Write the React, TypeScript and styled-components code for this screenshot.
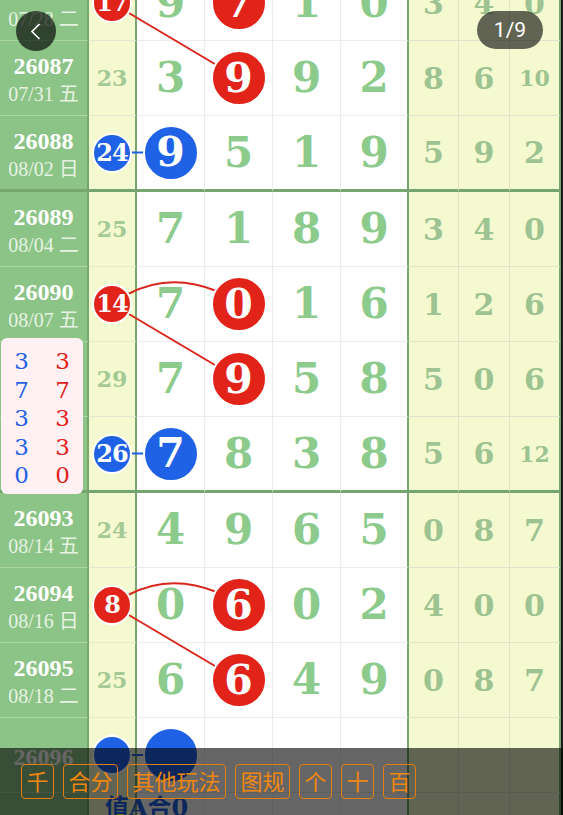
import React from "react";
import styled, { createGlobalStyle } from "styled-components";

const GREEN = "#8cc487";
const EDGE = "#76a56e";
const YELLOW = "#f5f9cf";
const RED = "#e2231a";
const BLUE = "#1f62e6";

const SERIF = `"DejaVu Serif", "Liberation Serif", "Noto Sans CJK SC", serif`;
const NARROW = `"Liberation Serif", "Noto Sans CJK SC", serif`;
const SANS = `"Noto Sans CJK SC", "Noto Sans", sans-serif`;

type Kind = "period" | "sum" | "digit" | "tail";
type Color = "red" | "blue";

const bg: Record<Kind, string> = {
  period: GREEN,
  sum: YELLOW,
  digit: "#ffffff",
  tail: YELLOW,
};

const line: Record<Kind, string> = {
  period: "#a9d3a3",
  sum: "#e6e9cf",
  digit: "#ebebeb",
  tail: "#e2e5cc",
};

const ballColor = (c: Color) => (c === "red" ? RED : BLUE);

type DrawRow = {
  id: string;
  date?: string;
  wd?: string;
  sum: number | null;
  sumBall?: Color;
  digits: (number | null)[];
  ball?: [number, Color];
  tail: (number | null)[];
  end?: boolean;
};

const rows: DrawRow[] = [
  { id: "26086", date: "07/28", wd: "二", sum: 17, sumBall: "red", digits: [9, 7, 1, 0], ball: [1, "red"], tail: [3, 4, 0] },
  { id: "26087", date: "07/31", wd: "五", sum: 23, digits: [3, 9, 9, 2], ball: [1, "red"], tail: [8, 6, 10] },
  { id: "26088", date: "08/02", wd: "日", sum: 24, sumBall: "blue", digits: [9, 5, 1, 9], ball: [0, "blue"], tail: [5, 9, 2], end: true },
  { id: "26089", date: "08/04", wd: "二", sum: 25, digits: [7, 1, 8, 9], tail: [3, 4, 0] },
  { id: "26090", date: "08/07", wd: "五", sum: 14, sumBall: "red", digits: [7, 0, 1, 6], ball: [1, "red"], tail: [1, 2, 6] },
  { id: "26091", date: "08/09", wd: "日", sum: 29, digits: [7, 9, 5, 8], ball: [1, "red"], tail: [5, 0, 6] },
  { id: "26092", date: "08/11", wd: "二", sum: 26, sumBall: "blue", digits: [7, 8, 3, 8], ball: [0, "blue"], tail: [5, 6, 12], end: true },
  { id: "26093", date: "08/14", wd: "五", sum: 24, digits: [4, 9, 6, 5], tail: [0, 8, 7] },
  { id: "26094", date: "08/16", wd: "日", sum: 8, sumBall: "red", digits: [0, 6, 0, 2], ball: [1, "red"], tail: [4, 0, 0] },
  { id: "26095", date: "08/18", wd: "二", sum: 25, digits: [6, 6, 4, 9], ball: [1, "red"], tail: [0, 8, 7] },
  { id: "26096", sum: null, sumBall: "blue", digits: [null, null, null, null], ball: [0, "blue"], tail: [null, null, null] },
];

const missBlue = [3, 7, 3, 3, 0];
const missRed = [3, 7, 3, 3, 0];
const tools = ["千", "合分", "其他玩法", "图规", "个", "十", "百"];

// row geometry, used by the link lines
const heights = rows.map((r) => (r.end ? 76 : 75));
const tops = heights.map((_, i) => heights.slice(0, i).reduce((a, b) => a + b, 0));
const centerY = (i: number) => tops[i] + (heights[i] - (rows[i].end ? 3 : 1)) / 2;
const SUM_X = 112;
const COL_X = [170.5, 238.5, 306.5, 374];

const GlobalStyle = createGlobalStyle`
  html, body {
    margin: 0;
    padding: 0;
    background: #1c1c1c;
    overflow: hidden;
  }
`;

const Screen = styled.div`
  position: relative;
  width: 563px;
  height: 815px;
  overflow: hidden;
  background: #1c1c1c;
`;

const Table = styled.div`
  position: relative;
  width: 561px;
  margin-top: -34px;
`;

const Row = styled.div<{ $end?: boolean }>`
  display: grid;
  grid-template-columns: 89px 48px repeat(4, 68px) 50px 51px 51px;
  height: ${(p) => (p.$end ? 76 : 75)}px;
`;

const Cell = styled.div<{ $kind: Kind; $end?: boolean; $edge?: boolean }>`
  box-sizing: border-box;
  display: flex;
  align-items: center;
  justify-content: center;
  background: ${(p) => bg[p.$kind]};
  border-right: ${(p) => (p.$edge ? `2px solid ${EDGE}` : `1px solid ${line[p.$kind]}`)};
  border-bottom: ${(p) => (p.$end ? `3px solid ${EDGE}` : `1px solid ${line[p.$kind]}`)};
`;

const PeriodCell = styled(Cell)`
  flex-direction: column;
  padding-top: 3px;
`;

const PeriodNo = styled.div`
  font-family: ${NARROW};
  font-weight: 700;
  font-size: 24px;
  line-height: 26px;
  color: #ffffff;
`;

const PeriodDate = styled.div`
  margin-top: 3px;
  font-family: ${NARROW};
  font-size: 20px;
  line-height: 24px;
  color: #e6f3e2;
`;

const SumNum = styled.span`
  font-family: ${SERIF};
  font-weight: 700;
  font-size: 22px;
  color: #a3c995;
`;

const Digit = styled.span`
  font-family: ${SERIF};
  font-weight: 700;
  font-size: 42px;
  line-height: 1;
  color: #8ccb8c;
`;

const TailNum = styled.span<{ $wide?: boolean }>`
  font-family: ${SERIF};
  font-weight: 700;
  font-size: ${(p) => (p.$wide ? 22 : 30)}px;
  color: #9cc391;
`;

const Ball = styled.div<{ $color: Color; $large?: boolean }>`
  position: relative;
  z-index: 2;
  box-sizing: border-box;
  width: ${(p) => (p.$large ? 56 : 40)}px;
  height: ${(p) => (p.$large ? 56 : 40)}px;
  flex-shrink: 0;
  border-radius: 50%;
  border: 2px solid #ffffff;
  background: ${(p) => ballColor(p.$color)};
  display: flex;
  align-items: center;
  justify-content: center;
  color: #ffffff;
  font-family: ${SERIF};
  font-weight: 700;
  font-size: ${(p) => (p.$large ? 41 : 24)}px;
  letter-spacing: ${(p) => (p.$large ? 0 : -1)}px;
  line-height: 1;
`;

const Links = styled.svg`
  position: absolute;
  left: 0;
  top: 0;
  z-index: 1;
  pointer-events: none;
`;

const StatCell = styled(Cell)`
  align-items: flex-start;
  justify-content: flex-start;
  padding: 1px 0 0 16px;
`;

const StatText = styled.span`
  position: relative;
  z-index: 2;
  white-space: nowrap;
  font-family: ${SERIF};
  font-weight: 700;
  font-size: 24px;
  line-height: 28px;
  color: ${BLUE};
`;

const MissPanel = styled.div`
  position: absolute;
  left: 1px;
  top: 372px;
  z-index: 3;
  box-sizing: border-box;
  width: 82px;
  height: 156px;
  padding-top: 9px;
  border-radius: 6px;
  background: #fff0f4;
  display: grid;
  grid-template-columns: 1fr 1fr;
`;

const MissColumn = styled.div<{ $color: Color }>`
  display: flex;
  flex-direction: column;
  align-items: center;
  font-family: "DejaVu Serif", serif;
  font-size: 23px;
  line-height: 28.5px;
  color: ${(p) => ballColor(p.$color)};
`;

const BackButton = styled.div`
  position: absolute;
  left: 16px;
  top: 11px;
  z-index: 6;
  width: 40px;
  height: 40px;
  border-radius: 50%;
  background: rgba(0, 0, 0, 0.66);
  display: flex;
  align-items: center;
  justify-content: center;
`;

const PagePill = styled.div`
  position: absolute;
  left: 477px;
  top: 11px;
  z-index: 6;
  width: 66px;
  height: 38px;
  border-radius: 19px;
  background: rgba(0, 0, 0, 0.6);
  display: flex;
  align-items: center;
  justify-content: center;
  color: #ffffff;
  font-family: Roboto, "Noto Sans", sans-serif;
  font-size: 21px;
`;

const Toolbar = styled.div`
  position: absolute;
  left: 0;
  right: 0;
  bottom: 0;
  z-index: 6;
  box-sizing: border-box;
  height: 67px;
  padding: 16px 0 0 21px;
  background: rgba(0, 0, 0, 0.6);
  display: flex;
  align-items: flex-start;
  gap: 9px;
`;

const ToolButton = styled.div`
  box-sizing: border-box;
  height: 35px;
  padding: 0 4.5px;
  border: 1.5px solid #e67e0f;
  border-radius: 4px;
  color: #f0870e;
  font-family: ${SANS};
  font-size: 22px;
  line-height: 31px;
`;

const DrawLine = ({ r }: { r: DrawRow }) => (
  <Row $end={r.end}>
    <PeriodCell $kind="period" $end={r.end} $edge>
      <PeriodNo>{r.id}</PeriodNo>
      {r.date && (
        <PeriodDate>
          {r.date} {r.wd}
        </PeriodDate>
      )}
    </PeriodCell>
    <Cell $kind="sum" $end={r.end} $edge>
      {r.sumBall ? <Ball $color={r.sumBall}>{r.sum ?? ""}</Ball> : <SumNum>{r.sum}</SumNum>}
    </Cell>
    {r.digits.map((d, i) => (
      <Cell key={i} $kind="digit" $end={r.end} $edge={i === 3}>
        {r.ball && r.ball[0] === i ? (
          <Ball $color={r.ball[1]} $large>
            {d ?? ""}
          </Ball>
        ) : (
          <Digit>{d}</Digit>
        )}
      </Cell>
    ))}
    {r.tail.map((t, i) => (
      <Cell key={i} $kind="tail" $end={r.end} $edge={i === 2}>
        <TailNum $wide={t !== null && t > 9}>{t}</TailNum>
      </Cell>
    ))}
  </Row>
);

const App = () => {
  const links: React.ReactNode[] = [];
  rows.forEach((r, i) => {
    if (!r.sumBall) return;
    const c = centerY(i);
    if (r.sumBall === "blue") {
      links.push(<line key={`b${i}`} x1={SUM_X} y1={c} x2={COL_X[0]} y2={c} stroke={BLUE} strokeWidth={2} />);
      return;
    }
    links.push(
      <path
        key={`c${i}`}
        d={`M ${SUM_X + 16} ${c - 10} Q 170 ${c - 32} ${COL_X[1] - 22} ${c - 13}`}
        fill="none"
        stroke="#d9261c"
        strokeWidth={2}
      />
    );
    if (i + 1 < rows.length) {
      links.push(
        <line key={`l${i}`} x1={SUM_X} y1={c} x2={COL_X[1]} y2={centerY(i + 1)} stroke="#d9261c" strokeWidth={2} />
      );
    }
  });

  return (
    <Screen>
      <GlobalStyle />
      <Table>
        {rows.map((r) => (
          <DrawLine key={r.id} r={r} />
        ))}
        <Row>
          <Cell $kind="period" $edge />
          <StatCell $kind="sum" $edge>
            <StatText>值A合0</StatText>
          </StatCell>
          {[0, 1, 2, 3].map((i) => (
            <Cell key={i} $kind="digit" $edge={i === 3} />
          ))}
          {[0, 1, 2].map((i) => (
            <Cell key={i} $kind="tail" $edge={i === 2} />
          ))}
        </Row>
        <Links width={561} height={900}>
          {links}
        </Links>
        <MissPanel>
          <MissColumn $color="blue">
            {missBlue.map((n, i) => (
              <span key={i}>{n}</span>
            ))}
          </MissColumn>
          <MissColumn $color="red">
            {missRed.map((n, i) => (
              <span key={i}>{n}</span>
            ))}
          </MissColumn>
        </MissPanel>
      </Table>

      <BackButton>
        <svg width="40" height="40" viewBox="0 0 40 40">
          <polyline points="23.5,13 16,20.5 23.5,28" fill="none" stroke="#ffffff" strokeWidth="1.6" />
        </svg>
      </BackButton>
      <PagePill>1/9</PagePill>

      <Toolbar>
        {tools.map((t) => (
          <ToolButton key={t}>{t}</ToolButton>
        ))}
      </Toolbar>
    </Screen>
  );
};

export default App;
